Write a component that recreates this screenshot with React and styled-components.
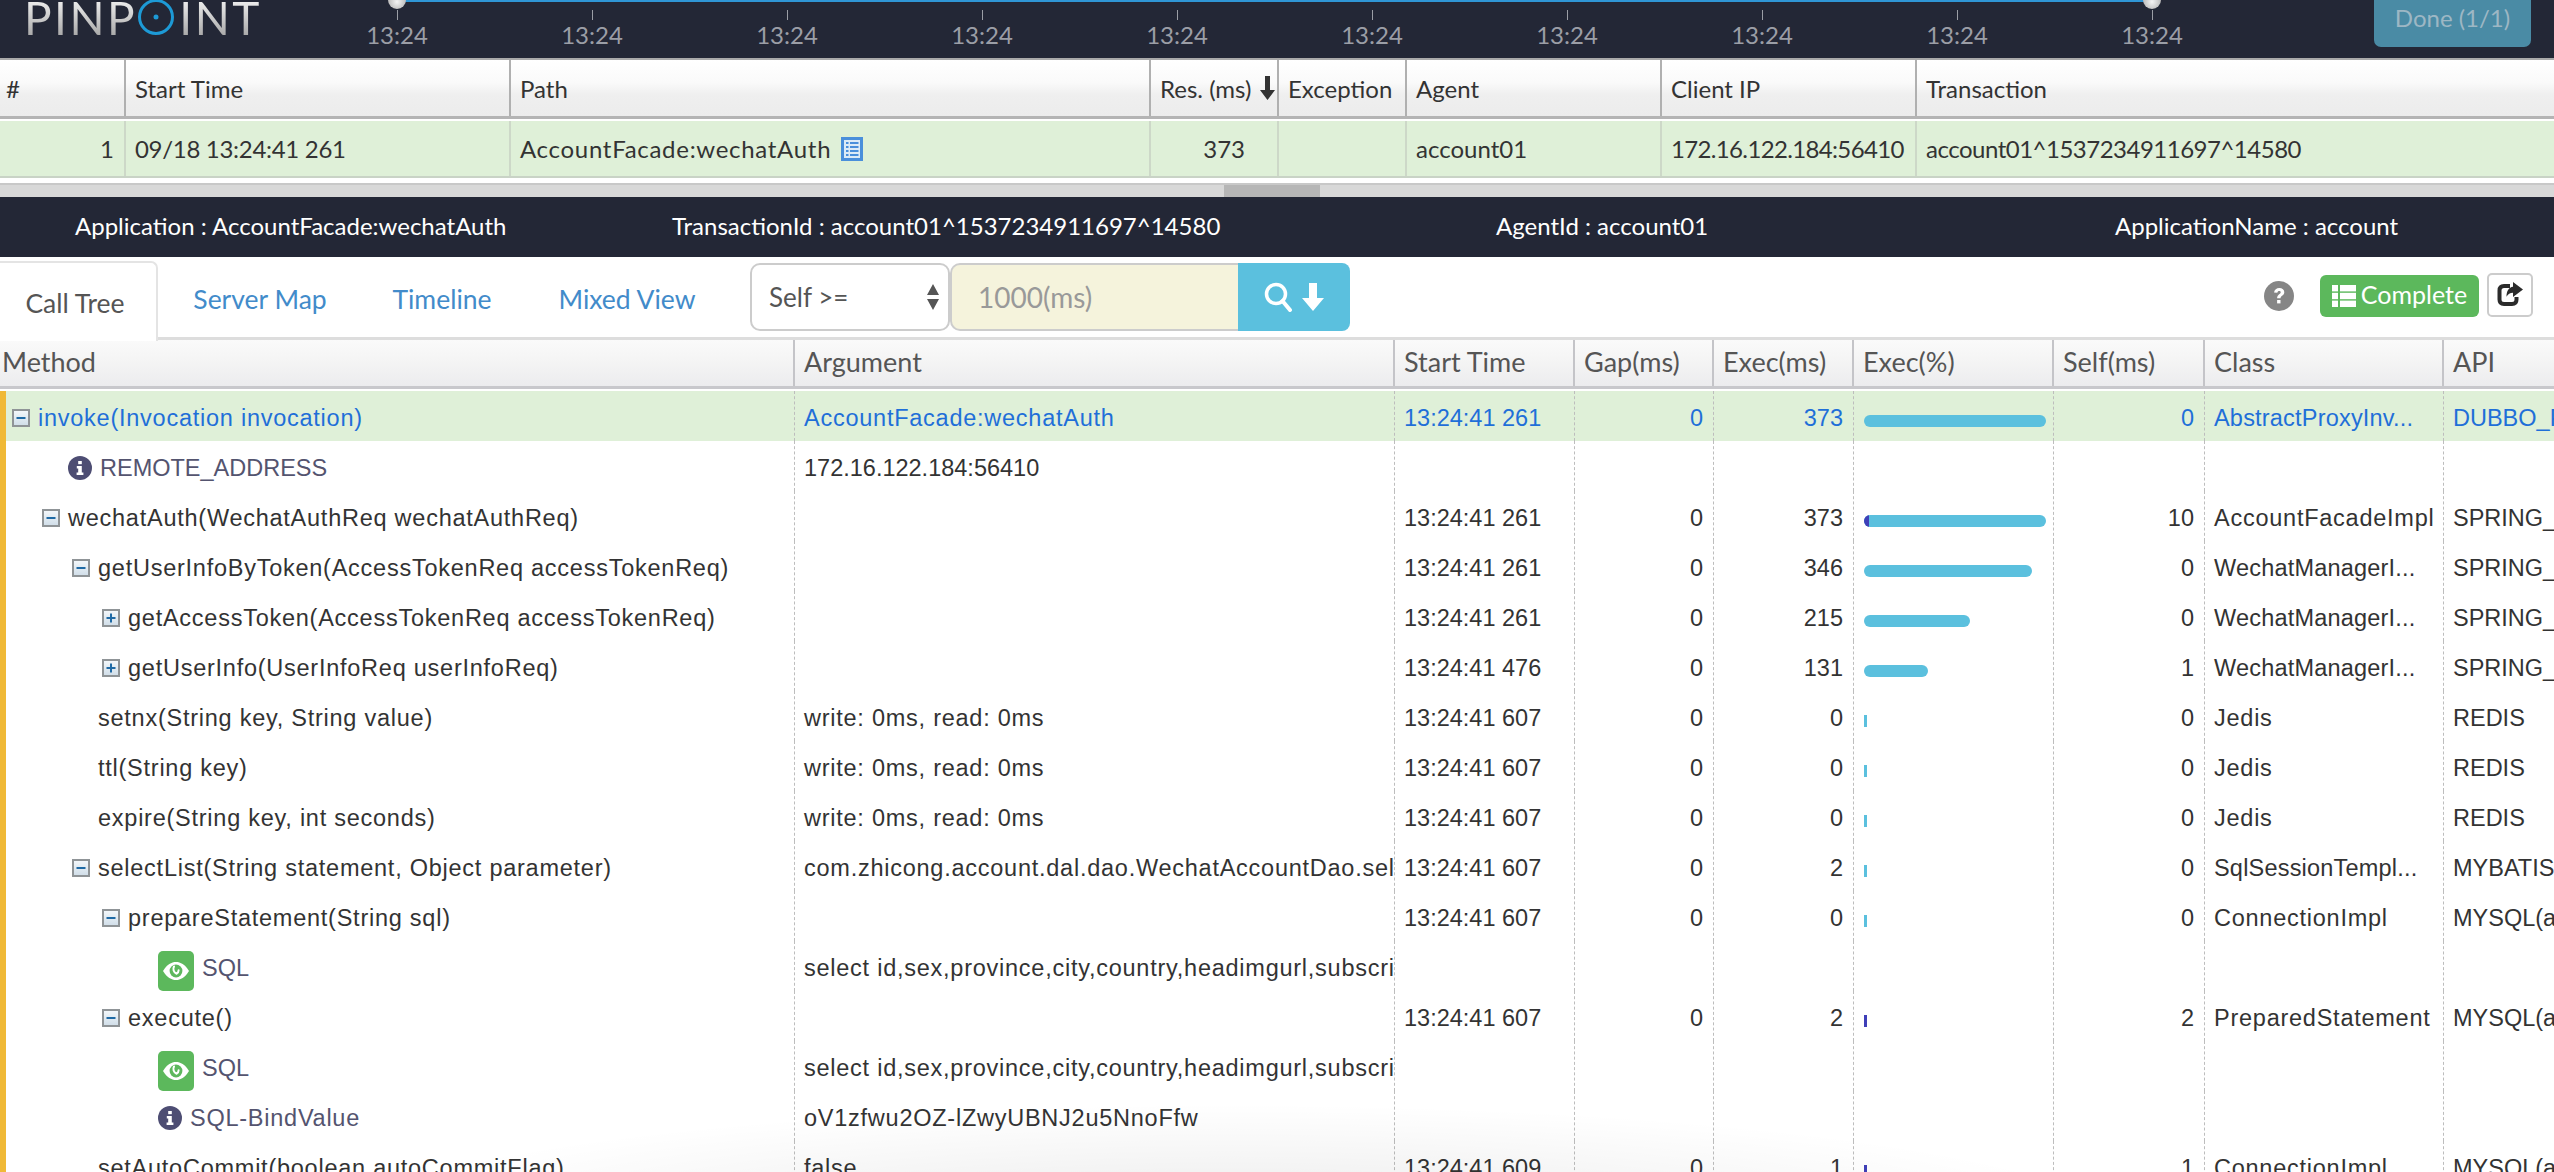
import React from "react";
import styled, { createGlobalStyle } from "styled-components";

const GlobalStyle = createGlobalStyle`
  html, body {
    margin: 0;
    padding: 0;
    background: #fff;
    overflow: hidden;
  }
  * {
    box-sizing: border-box;
  }
`;

const DARK = "#232736";
const LATO = `Lato, "Liberation Sans", sans-serif`;
const HELV = `"Liberation Sans", Arial, sans-serif`;

const TICKS = [0, 1, 2, 3, 4, 5, 6, 7, 8, 9];

const TOP_COLS = "124px 385px 640px 128px 128px 255px 255px 1fr";
const TREE_COLS = "795px 600px 180px 139px 140px 200px 151px 239px 1fr";

const ROWS = [
  { kind: "minus", depth: 0, method: "invoke(Invocation invocation)", arg: "AccountFacade:wechatAuth", start: "13:24:41 261", gap: 0, exec: 373, bar: 182, self: 0, cls: "AbstractProxyInv...", api: "DUBBO_PROVIDER", active: true },
  { kind: "info", depth: 2, method: "REMOTE_ADDRESS", arg: "172.16.122.184:56410" },
  { kind: "minus", depth: 1, method: "wechatAuth(WechatAuthReq wechatAuthReq)", start: "13:24:41 261", gap: 0, exec: 373, bar: 182, selfBar: 5, self: 10, cls: "AccountFacadeImpl", api: "SPRING_BEAN" },
  { kind: "minus", depth: 2, method: "getUserInfoByToken(AccessTokenReq accessTokenReq)", start: "13:24:41 261", gap: 0, exec: 346, bar: 168, self: 0, cls: "WechatManagerI...", api: "SPRING_BEAN" },
  { kind: "plus", depth: 3, method: "getAccessToken(AccessTokenReq accessTokenReq)", start: "13:24:41 261", gap: 0, exec: 215, bar: 106, self: 0, cls: "WechatManagerI...", api: "SPRING_BEAN" },
  { kind: "plus", depth: 3, method: "getUserInfo(UserInfoReq userInfoReq)", start: "13:24:41 476", gap: 0, exec: 131, bar: 64, self: 1, cls: "WechatManagerI...", api: "SPRING_BEAN" },
  { depth: 3, method: "setnx(String key, String value)", arg: "write: 0ms, read: 0ms", start: "13:24:41 607", gap: 0, exec: 0, bar: 3, self: 0, cls: "Jedis", api: "REDIS" },
  { depth: 3, method: "ttl(String key)", arg: "write: 0ms, read: 0ms", start: "13:24:41 607", gap: 0, exec: 0, bar: 3, self: 0, cls: "Jedis", api: "REDIS" },
  { depth: 3, method: "expire(String key, int seconds)", arg: "write: 0ms, read: 0ms", start: "13:24:41 607", gap: 0, exec: 0, bar: 3, self: 0, cls: "Jedis", api: "REDIS" },
  { kind: "minus", depth: 2, method: "selectList(String statement, Object parameter)", arg: "com.zhicong.account.dal.dao.WechatAccountDao.selectList", start: "13:24:41 607", gap: 0, exec: 2, bar: 3, self: 0, cls: "SqlSessionTempl...", api: "MYBATIS" },
  { kind: "minus", depth: 3, method: "prepareStatement(String sql)", start: "13:24:41 607", gap: 0, exec: 0, bar: 3, self: 0, cls: "ConnectionImpl", api: "MYSQL(accountdb)" },
  { kind: "sql", depth: 5, method: "SQL", arg: "select id,sex,province,city,country,headimgurl,subscribe" },
  { kind: "minus", depth: 3, method: "execute()", start: "13:24:41 607", gap: 0, exec: 2, bar: 3, selfBar: 3, self: 2, cls: "PreparedStatement", api: "MYSQL(accountdb)" },
  { kind: "sql", depth: 5, method: "SQL", arg: "select id,sex,province,city,country,headimgurl,subscribe" },
  { kind: "info", depth: 5, method: "SQL-BindValue", arg: "oV1zfwu2OZ-lZwyUBNJ2u5NnoFfw" },
  { depth: 3, method: "setAutoCommit(boolean autoCommitFlag)", arg: "false", start: "13:24:41 609", gap: 0, exec: 1, bar: 3, selfBar: 3, self: 1, cls: "ConnectionImpl", api: "MYSQL(accountdb)" },
];

// the screenshot's font runs wider on lowercase than Liberation Sans, digits and caps match
const spacing = (text = "") => {
  if (text.endsWith("...")) return 0.2;
  return /[a-z]{3}/.test(text) ? 0.75 : 0;
};

const Toggle = ({ open }) => (
  <svg width="18" height="18" viewBox="0 0 18 18">
    <defs>
      <linearGradient id="tg" x1="0" y1="0" x2="0" y2="1">
        <stop offset="0" stopColor="#f4f8fb" />
        <stop offset="1" stopColor="#cfdde8" />
      </linearGradient>
    </defs>
    <rect x="1" y="1" width="16" height="16" fill="url(#tg)" stroke="#8f9497" strokeWidth="2" />
    <rect x="4.500" y="8" width="9" height="2" fill="#1f6aa5" />
    {!open && <rect x="8" y="4.500" width="2" height="9" fill="#1f6aa5" />}
  </svg>
);

const InfoIcon = () => (
  <svg width="24" height="24" viewBox="0 0 24 24">
    <circle cx="12" cy="12" r="12" fill="#4d4d73" />
    <rect x="10.200" y="5" width="3.600" height="3.200" fill="#fff" />
    <path d="M8.800 10h5v6.400h1.600V19H8.600v-2.600h1.600v-3.800H8.800z" fill="#fff" />
  </svg>
);

const EyeTile = styled.span`
  width: 36px;
  height: 40px;
  border-radius: 5px;
  background: #5cb85c;
  display: flex;
  align-items: center;
  justify-content: center;
  flex: none;
  margin-top: 6px;
`;

const EyeIcon = () => (
  <svg width="28" height="22" viewBox="0 0 28 22">
    <path d="M1 11C5 4.500 9.500 2 14 2s9 2.500 13 9c-4 6.500-8.500 9-13 9S5 17.500 1 11z" fill="#fff" />
    <circle cx="14" cy="11" r="6.400" fill="#5cb85c" />
    <path d="M12 6.500c-1.300 2.400-.6 6 2.600 7.200 1.400-.9 2-2.200 2-3.400" fill="none" stroke="#fff" strokeWidth="2" strokeLinecap="round" />
  </svg>
);

const DocIcon = () => (
  <svg width="22" height="24" viewBox="0 0 22 24">
    <rect x="0" y="0" width="22" height="24" fill="#4a8fdb" />
    <rect x="3" y="3" width="16" height="18" fill="#dcebf7" />
    <g fill="#4a8fdb">
      <rect x="5" y="5" width="2.500" height="2" />
      <rect x="9" y="5" width="8.500" height="2" />
      <rect x="5" y="9" width="2.500" height="2" />
      <rect x="9" y="9" width="8.500" height="2" />
      <rect x="5" y="13" width="2.500" height="2" />
      <rect x="9" y="13" width="8.500" height="2" />
      <rect x="5" y="17" width="2.500" height="2" />
      <rect x="9" y="17" width="8.500" height="2" />
    </g>
  </svg>
);

const SortDown = () => (
  <svg width="15" height="24" viewBox="0 0 15 24">
    <path d="M5 0h5v14h5l-7.500 10L0 14h5z" fill="#333" />
  </svg>
);

const SelectArrows = () => (
  <svg width="14" height="26" viewBox="0 0 14 26">
    <path d="M7 0l6 11H1zM7 26L1 15h12z" fill="#555" />
  </svg>
);

const SearchIcon = () => (
  <svg width="30" height="30" viewBox="0 0 30 30">
    <circle cx="12" cy="12" r="9.500" fill="none" stroke="#fff" strokeWidth="3.500" />
    <path d="M18.500 19l7.500 9" stroke="#fff" strokeWidth="4" strokeLinecap="round" />
  </svg>
);

const ArrowIcon = () => (
  <svg width="22" height="28" viewBox="0 0 22 28">
    <path d="M7 0h8v15h7L11 28 0 15h7z" fill="#fff" />
  </svg>
);

const QuestionIcon = () => (
  <svg width="30" height="30" viewBox="0 0 30 30">
    <circle cx="15" cy="15" r="15" fill="#868686" />
    <path d="M10 11.500c.5-3 2.600-4.500 5.300-4.500 3 0 5 1.700 5 4.200 0 3.300-3.800 3.500-3.800 6h-3.400c0-3.900 3.600-4.200 3.600-5.800 0-.9-.6-1.400-1.500-1.400-1 0-1.600.6-1.900 1.800z" fill="#fff" />
    <rect x="13.100" y="19" width="3.400" height="3.400" fill="#fff" />
  </svg>
);

const ListIcon = () => (
  <svg width="24" height="22" viewBox="0 0 24 22">
    <g fill="#fff">
      <rect x="0" y="0" width="6" height="6.400" />
      <rect x="8" y="0" width="16" height="6.400" />
      <rect x="0" y="7.800" width="6" height="6.400" />
      <rect x="8" y="7.800" width="16" height="6.400" />
      <rect x="0" y="15.600" width="6" height="6.400" />
      <rect x="8" y="15.600" width="16" height="6.400" />
    </g>
  </svg>
);

const ShareIcon = () => (
  <svg width="26" height="26" viewBox="0 0 26 26">
    <path d="M13 4H7C4 4 2.500 5.500 2.500 8.500v9C2.500 20.500 4 22 7 22h8c3 0 4.500-1.500 4.500-4.500V15" fill="none" stroke="#2b2b2b" strokeWidth="4" />
    <path d="M16 0l10 7.500L16 15v-4.200c-3 0-5 1.200-6.500 4 0-6 2.500-9.500 6.500-10z" fill="#2b2b2b" />
  </svg>
);

const Page = styled.div`
  position: relative;
  width: 2554px;
  height: 1172px;
  overflow: hidden;
  background: #fff;
  font-family: ${LATO};
`;

const Header = styled.header`
  height: 60px;
  background: ${DARK};
  border-bottom: 2px solid #aaa;
  display: flex;
  overflow: hidden;
`;

const Logo = styled.div`
  width: 299.500px;
  flex: none;
  padding: 0 0 0 24px;
  display: flex;
  align-items: flex-start;
  height: 36px;
`;

const LogoText = styled.span`
  font-family: ${LATO};
  font-weight: 400;
  font-size: 46px;
  line-height: 36px;
  letter-spacing: 2.500px;
  background: linear-gradient(180deg, #eee, #a8a8a8);
  -webkit-background-clip: text;
  background-clip: text;
  color: transparent;
`;

const LogoRing = styled.svg`
  flex: none;
  margin: 0 4px 0 0;
`;

const Timeline = styled.div`
  position: relative;
  display: flex;
  flex: none;
`;

const RangeLine = styled.div`
  position: absolute;
  top: 0;
  left: 97.500px;
  right: 97.500px;
  height: 2px;
  background: #2f96d6;
`;

const Knob = styled.span`
  position: absolute;
  top: -9px;
  width: 18px;
  height: 18px;
  margin-left: -9px;
  left: ${(p) => p.$left}px;
  border-radius: 50%;
  background: radial-gradient(circle at 50% 60%, #f4f4f4, #9a9a9a);
`;

const Tick = styled.div`
  width: 195px;
  display: flex;
  flex-direction: column;
  align-items: center;
  padding-top: 10px;
  color: #9b9ea6;
  font-size: 24px;
`;

const TickMark = styled.span`
  width: 1px;
  height: 10px;
  background: #9b9ea6;
`;

const TickLabel = styled.span`
  line-height: 30px;
`;

const DoneButton = styled.div`
  margin-left: auto;
  margin-right: 23px;
  width: 157px;
  height: 47px;
  background: #4a8ba5;
  color: #9db7c4;
  border-radius: 0 0 7px 7px;
  font-size: 24px;
  display: flex;
  align-items: center;
  justify-content: center;
  padding-bottom: 12px;
`;

const TopHead = styled.div`
  display: grid;
  grid-template-columns: ${TOP_COLS};
  height: 59px;
  background: linear-gradient(180deg, #fff 0%, #fafafa 40%, #efefef 62%, #ececec 100%);
  border-bottom: 3px solid #b4b4b4;
`;

const TopHeadCell = styled.div`
  display: flex;
  align-items: center;
  justify-content: space-between;
  padding: 0 2px 0 ${(p) => (p.$first ? 6 : 9)}px;
  font-size: 24px;
  color: #333;
  white-space: nowrap;
  border-left: ${(p) => (p.$first ? "none" : "2px solid #b0b0b0")};
`;

const TopRow = styled.div`
  display: grid;
  grid-template-columns: ${TOP_COLS};
  height: 57px;
  margin-top: 2px;
  background: #dff0d8;
  border-bottom: 2px solid #c9d3c6;
`;

const TopCell = styled.div`
  display: flex;
  align-items: center;
  gap: 10px;
  justify-content: ${(p) => (p.$right ? "flex-end" : "flex-start")};
  padding: 0 ${(p) => p.$pad || 10}px 0 9px;
  font-size: 24px;
  letter-spacing: ${(p) => p.$ls || 0}px;
  color: #333;
  white-space: nowrap;
  border-left: ${(p) => (p.$first ? "none" : "2px solid #cdd8c8")};
`;

const ScrollTrack = styled.div`
  margin-top: 5px;
  height: 14px;
  background: #d8d8d8;
  border-top: 2px solid #c8c8c8;
  display: flex;
  justify-content: center;
`;

const ScrollThumb = styled.div`
  width: 96px;
  margin-left: -10px;
  background: #b6b6b6;
`;

const InfoBar = styled.div`
  height: 60px;
  background: ${DARK};
  color: #fff;
  font-size: 24px;
  padding: 0 0 4px 75px;
  display: grid;
  grid-template-columns: 597px 824px 619px 1fr;
  align-items: center;
  white-space: nowrap;
`;

const ToolRow = styled.div`
  height: 83px;
  padding-top: 4px;
  display: flex;
  border-bottom: 3px solid #ddd;
`;

const Tabs = styled.nav`
  display: flex;
  width: 750px;
  flex: none;
  align-self: stretch;
`;

const Tab = styled.div`
  width: ${(p) => p.$width}px;
  height: ${(p) => (p.$active ? 80 : 76)}px;
  display: flex;
  align-items: center;
  justify-content: center;
  padding: ${(p) => (p.$active ? "2px 6px 0 0" : "0")};
  font-size: 26.500px;
  color: ${(p) => (p.$active ? "#555" : "#428bca")};
  background: #fff;
  border: ${(p) => (p.$active ? "2px solid #e4e4e4" : "none")};
  border-left: none;
  border-bottom: none;
  border-radius: 0 7px 0 0;
  margin-bottom: -3px;
  position: relative;
`;

const SelectBox = styled.div`
  width: 200px;
  height: 68px;
  margin-top: 2px;
  border: 2px solid #ccc;
  border-radius: 10px;
  background: #fff;
  display: flex;
  align-items: center;
  justify-content: space-between;
  padding: 0 8px 0 17px;
  font-size: 26px;
  color: #555;
`;

const LimitInput = styled.input`
  width: 288px;
  height: 68px;
  margin-top: 2px;
  border: 2px solid #ccc;
  border-right: none;
  border-radius: 10px 0 0 10px;
  background: #f5f3dc;
  padding: 0 0 0 26px;
  font-family: ${LATO};
  font-size: 28px;
  color: #555;
  outline: none;
  &::placeholder {
    color: #999;
    opacity: 1;
  }
`;

const SearchButton = styled.div`
  width: 112px;
  height: 68px;
  margin-top: 2px;
  background: #5bc0de;
  border-radius: 0 8px 8px 0;
  display: flex;
  align-items: center;
  justify-content: center;
  gap: 8px;
`;

const ToolActions = styled.div`
  margin-left: auto;
  padding: 12px 21px 0 0;
  display: flex;
  align-items: flex-start;
  gap: 8px;
`;

const HelpWrap = styled.span`
  margin: 8px 18px 0 0;
  display: flex;
`;

const CompleteBadge = styled.div`
  width: 159px;
  height: 42px;
  margin-top: 2px;
  background: #5cb85c;
  border-radius: 6px;
  color: #fff;
  font-size: 25px;
  display: flex;
  align-items: center;
  justify-content: center;
  gap: 5px;
`;

const CompleteLabel = styled.span`
  padding-bottom: 4px;
`;

const ShareButton = styled.div`
  width: 46px;
  height: 44px;
  border: 2px solid #ccc;
  border-radius: 5px;
  display: flex;
  align-items: center;
  justify-content: center;
`;

const TreeHead = styled.div`
  display: grid;
  grid-template-columns: ${TREE_COLS};
  height: 49px;
  background: linear-gradient(180deg, #fafafa 0%, #f5f5f5 40%, #ececee 100%);
  border-bottom: 3px solid #c8c8cc;
`;

const TreeHeadCell = styled.div`
  display: flex;
  align-items: center;
  padding: 0 0 3px ${(p) => (p.$first ? 2 : 9)}px;
  font-size: 27px;
  color: #555;
  white-space: nowrap;
  border-right: 2px solid #c4c4c8;
  &:last-child {
    border-right: none;
  }
`;

const TreeBody = styled.div`
  margin-top: 2px;
  border-left: 6px solid #f0b936;
`;

const TreeRow = styled.div`
  display: grid;
  grid-template-columns: 789px 600px 180px 139px 140px 200px 151px 239px 1fr;
  height: 50px;
  background: ${(p) => (p.$active ? "#dff0d8" : "transparent")};
  color: ${(p) => (p.$active ? "#1f6fd8" : "#333")};
`;

const Cell = styled.div`
  display: flex;
  align-items: center;
  padding: 4px ${(p) => (p.$right ? 10 : 0)}px 0 ${(p) => (p.$right ? 0 : 9)}px;
  justify-content: ${(p) => (p.$right ? "flex-end" : "flex-start")};
  font-family: ${HELV};
  font-size: 23.500px;
  letter-spacing: ${(p) => p.$ls || 0}px;
  white-space: nowrap;
  overflow: hidden;
  border-right: 1.500px dashed #bdbdbd;
  &:last-child {
    border-right: none;
  }
`;

const MethodCell = styled(Cell)`
  padding-left: ${(p) => p.$indent}px;
  gap: 8px;
`;

const MethodText = styled.span`
  color: ${(p) => (p.$note ? "#54546f" : "inherit")};
  padding-top: ${(p) => (p.$note ? 0 : 1)}px;
`;

const BarTrack = styled.div`
  width: 100%;
  padding: 6px 0 0 1px;
  display: flex;
`;

const Bar = styled.div`
  height: 12px;
  border-radius: ${(p) => (p.$thin ? 0 : 6)}px;
  background: #5bc0de;
  display: flex;
  overflow: hidden;
`;

const SelfPart = styled.div`
  height: 100%;
  background: #3f3fb8;
`;

const BottomHaze = styled.div`
  position: absolute;
  left: 300px;
  right: 400px;
  bottom: -60px;
  height: 130px;
  pointer-events: none;
  background: radial-gradient(ellipse at 50% 100%, rgba(0, 0, 0, 0.09), rgba(0, 0, 0, 0) 70%);
`;

const TreeLine = ({ row }) => {
  const isToggle = row.kind === "minus" || row.kind === "plus";
  const indent = (isToggle ? 6 : 2) + 30 * row.depth;
  const isNote = row.kind === "info" || row.kind === "sql";
  return (
    <TreeRow $active={row.active}>
      <MethodCell $indent={indent} $ls={spacing(row.method)}>
        {isToggle && <Toggle open={row.kind === "minus"} />}
        {row.kind === "info" && <InfoIcon />}
        {row.kind === "sql" && (
          <EyeTile>
            <EyeIcon />
          </EyeTile>
        )}
        <MethodText $note={isNote}>{row.method}</MethodText>
      </MethodCell>
      <Cell $ls={spacing(row.arg)}>{row.arg}</Cell>
      <Cell>{row.start}</Cell>
      <Cell $right>{row.gap}</Cell>
      <Cell $right>{row.exec}</Cell>
      <Cell>
        {row.bar !== undefined && (
          <BarTrack>
            <Bar $thin={row.bar < 6} style={{ width: row.bar }}>
              {row.selfBar && <SelfPart style={{ width: row.selfBar }} />}
            </Bar>
          </BarTrack>
        )}
      </Cell>
      <Cell $right>{row.self}</Cell>
      <Cell $ls={spacing(row.cls)}>{row.cls}</Cell>
      <Cell>{row.api}</Cell>
    </TreeRow>
  );
};

const App = () => (
  <Page>
    <GlobalStyle />
    <Header>
      <Logo>
        <LogoText>PINP</LogoText>
        <LogoRing width="38" height="36" viewBox="0 0 38 36">
          <circle cx="19" cy="17" r="16.500" fill="none" stroke="#1d9ad6" strokeWidth="3" />
          <circle cx="19" cy="17" r="2.500" fill="#1d9ad6" />
        </LogoRing>
        <LogoText>INT</LogoText>
      </Logo>
      <Timeline>
        <RangeLine />
        <Knob $left={97.5} />
        <Knob $left={1852.5} />
        {TICKS.map((t) => (
          <Tick key={t}>
            <TickMark />
            <TickLabel>13:24</TickLabel>
          </Tick>
        ))}
      </Timeline>
      <DoneButton>Done (1/1)</DoneButton>
    </Header>

    <TopHead>
      <TopHeadCell $first>#</TopHeadCell>
      <TopHeadCell>Start Time</TopHeadCell>
      <TopHeadCell>Path</TopHeadCell>
      <TopHeadCell>
        Res. (ms) <SortDown />
      </TopHeadCell>
      <TopHeadCell>Exception</TopHeadCell>
      <TopHeadCell>Agent</TopHeadCell>
      <TopHeadCell>Client IP</TopHeadCell>
      <TopHeadCell>Transaction</TopHeadCell>
    </TopHead>
    <TopRow>
      <TopCell $first $right>1</TopCell>
      <TopCell $ls={-0.3}>09/18 13:24:41 261</TopCell>
      <TopCell $ls={0.7}>
        AccountFacade:wechatAuth <DocIcon />
      </TopCell>
      <TopCell $right $pad={32}>373</TopCell>
      <TopCell />
      <TopCell>account01</TopCell>
      <TopCell $ls={-0.65}>172.16.122.184:56410</TopCell>
      <TopCell $ls={-0.5}>account01^1537234911697^14580</TopCell>
    </TopRow>
    <ScrollTrack>
      <ScrollThumb />
    </ScrollTrack>

    <InfoBar>
      <span>Application : AccountFacade:wechatAuth</span>
      <span>TransactionId : account01^1537234911697^14580</span>
      <span>AgentId : account01</span>
      <span>ApplicationName : account</span>
    </InfoBar>

    <ToolRow>
      <Tabs>
        <Tab $active $width={158}>Call Tree</Tab>
        <Tab $width={204}>Server Map</Tab>
        <Tab $width={160}>Timeline</Tab>
        <Tab $width={210}>Mixed View</Tab>
      </Tabs>
      <SelectBox>
        Self &gt;=
        <SelectArrows />
      </SelectBox>
      <LimitInput placeholder="1000(ms)" />
      <SearchButton>
        <SearchIcon />
        <ArrowIcon />
      </SearchButton>
      <ToolActions>
        <HelpWrap>
          <QuestionIcon />
        </HelpWrap>
        <CompleteBadge>
          <ListIcon />
          <CompleteLabel>Complete</CompleteLabel>
        </CompleteBadge>
        <ShareButton>
          <ShareIcon />
        </ShareButton>
      </ToolActions>
    </ToolRow>

    <TreeHead>
      <TreeHeadCell $first>Method</TreeHeadCell>
      <TreeHeadCell>Argument</TreeHeadCell>
      <TreeHeadCell>Start Time</TreeHeadCell>
      <TreeHeadCell>Gap(ms)</TreeHeadCell>
      <TreeHeadCell>Exec(ms)</TreeHeadCell>
      <TreeHeadCell>Exec(%)</TreeHeadCell>
      <TreeHeadCell>Self(ms)</TreeHeadCell>
      <TreeHeadCell>Class</TreeHeadCell>
      <TreeHeadCell>API</TreeHeadCell>
    </TreeHead>
    <TreeBody>
      {ROWS.map((row, i) => (
        <TreeLine key={i} row={row} />
      ))}
    </TreeBody>
    <BottomHaze />
  </Page>
);

export default App;
